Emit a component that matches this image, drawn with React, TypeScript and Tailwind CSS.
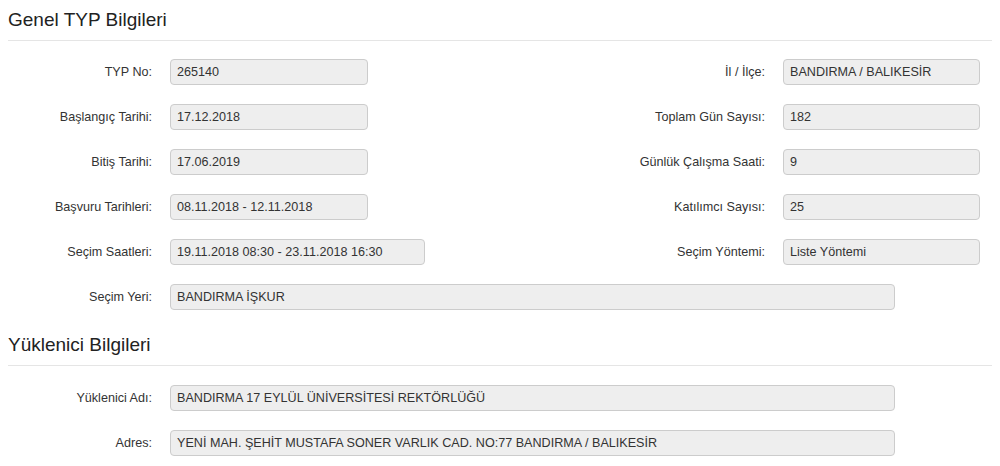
import React from "react";

type Field = { label: string; value: string; width?: string };

function Input({ value, className }: { value: string; className: string }) {
  return (
    <div
      className={`h-[26px] ml-[18px] flex items-center px-[6px] rounded-[4px] border border-[#cccccc] bg-[#eeeeee] text-[12.6px] text-[#333333] whitespace-nowrap overflow-hidden ${className}`}
    >
      {value}
    </div>
  );
}

function Label({ text, className }: { text: string; className: string }) {
  return (
    <div className={`text-right text-[12.6px] text-[#333333] whitespace-nowrap ${className}`}>
      {text}
    </div>
  );
}

function Heading({ title }: { title: string }) {
  return (
    <div className="px-2">
      <h2 className="text-[19px] leading-[20px] text-[#222222] pt-[10px] pb-[10px]">{title}</h2>
      <div className="border-b border-[#e5e5e5]" />
    </div>
  );
}

const pairs: [Field, Field][] = [
  [
    { label: "TYP No:", value: "265140" },
    { label: "İl / İlçe:", value: "BANDIRMA / BALIKESİR" },
  ],
  [
    { label: "Başlangıç Tarihi:", value: "17.12.2018" },
    { label: "Toplam Gün Sayısı:", value: "182" },
  ],
  [
    { label: "Bitiş Tarihi:", value: "17.06.2019" },
    { label: "Günlük Çalışma Saati:", value: "9" },
  ],
  [
    { label: "Başvuru Tarihleri:", value: "08.11.2018 - 12.11.2018" },
    { label: "Katılımcı Sayısı:", value: "25" },
  ],
  [
    { label: "Seçim Saatleri:", value: "19.11.2018 08:30 - 23.11.2018 16:30", width: "w-[255px]" },
    { label: "Seçim Yöntemi:", value: "Liste Yöntemi" },
  ],
];

export default function App() {
  return (
    <div
      className="w-[1000px] h-[466px] bg-white overflow-hidden"
      style={{ fontFamily: '"Liberation Sans", Arial, sans-serif' }}
    >
      <Heading title="Genel TYP Bilgileri" />
      <div className="flex flex-col gap-[19px] pt-[18px]">
        {pairs.map(([l, r]) => (
          <div key={l.label} className="flex items-center">
            <div className="w-[600px] flex items-center">
              <Label text={l.label} className="w-[152px]" />
              <Input value={l.value} className={l.width ?? "w-[198px]"} />
            </div>
            <div className="flex items-center">
              <Label text={r.label} className="w-[165px]" />
              <Input value={r.value} className="w-[197px]" />
            </div>
          </div>
        ))}
        <div className="flex items-center">
          <Label text="Seçim Yeri:" className="w-[152px]" />
          <Input value="BANDIRMA İŞKUR" className="w-[725px]" />
        </div>
      </div>
      <div className="pt-[15px]">
        <Heading title="Yüklenici Bilgileri" />
      </div>
      <div className="flex flex-col gap-[19px] pt-[19px]">
        <div className="flex items-center">
          <Label text="Yüklenici Adı:" className="w-[152px]" />
          <Input value="BANDIRMA 17 EYLÜL ÜNİVERSİTESİ REKTÖRLÜĞÜ" className="w-[725px]" />
        </div>
        <div className="flex items-center">
          <Label text="Adres:" className="w-[152px]" />
          <Input
            value="YENİ MAH. ŞEHİT MUSTAFA SONER VARLIK CAD. NO:77 BANDIRMA / BALIKESİR"
            className="w-[725px]"
          />
        </div>
      </div>
    </div>
  );
}
